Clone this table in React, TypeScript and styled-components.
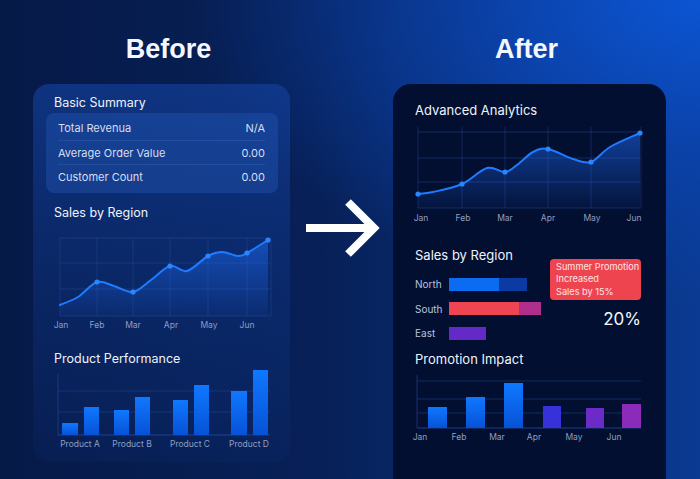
import React from 'react';
import styled, { createGlobalStyle } from 'styled-components';

type Pt = [number, number];

const GlobalStyle = createGlobalStyle`
  html, body {
    margin: 0;
    padding: 0;
    width: 700px;
    height: 479px;
    overflow: hidden;
  }
  body {
    font-family: Inter, "Noto Sans", sans-serif;
    background: #071d4f;
  }
`;

// catmull-rom -> bezier, keeps the curve passing through every point
const smoothPath = (pts: Pt[]) => {
  let d = `M${pts[0][0]},${pts[0][1]}`;
  for (let i = 0; i < pts.length - 1; i++) {
    const p0 = pts[i - 1] || pts[i];
    const p1 = pts[i];
    const p2 = pts[i + 1];
    const p3 = pts[i + 2] || p2;
    const c1x = p1[0] + (p2[0] - p0[0]) / 6;
    const c1y = p1[1] + (p2[1] - p0[1]) / 6;
    const c2x = p2[0] - (p3[0] - p1[0]) / 6;
    const c2y = p2[1] - (p3[1] - p1[1]) / 6;
    d += ` C${c1x},${c1y} ${c2x},${c2y} ${p2[0]},${p2[1]}`;
  }
  return d;
};

interface LineChartProps {
  id: string;
  width: number;
  height: number;
  points: Pt[];
  dots: Pt[];
  gridX: number[];
  gridY: number[];
  top: number;
  labels: { text: string; x: number }[];
  labelY: number;
}

const LineChart: React.FC<LineChartProps> = ({ id, width, height, points, dots, gridX, gridY, top, labels, labelY }) => {
  const line = smoothPath(points);
  const bottom = gridY[gridY.length - 1];
  const area = `${line} L${points[points.length - 1][0]},${bottom} L${points[0][0]},${bottom} Z`;
  const left = gridX[0];
  const right = gridX[gridX.length - 1];
  return (
    <ChartSvg width={width} height={height} viewBox={`0 0 ${width} ${height}`}>
      <defs>
        <linearGradient id={id} x1="0" y1="0" x2="0" y2="1">
          <stop offset="0%" stopColor="#1f6fff" stopOpacity="0.5" />
          <stop offset="100%" stopColor="#1f6fff" stopOpacity="0.06" />
        </linearGradient>
      </defs>
      {gridY.map((y) => (
        <line key={'h' + y} x1={left} x2={right} y1={y} y2={y} stroke="#2a52a6" strokeWidth="1" opacity="0.4" />
      ))}
      {gridX.map((x) => (
        <line key={'v' + x} x1={x} x2={x} y1={top} y2={bottom} stroke="#2a52a6" strokeWidth="1" opacity="0.35" />
      ))}
      <path d={area} fill={`url(#${id})`} />
      <path d={line} fill="none" stroke="#1f7bff" strokeWidth="2" strokeLinecap="round" />
      {dots.map(([x, y]) => (
        <circle key={x} cx={x} cy={y} r="2.6" fill="#2a86ff" />
      ))}
      {labels.map((l) => (
        <AxisLabel key={l.text} x={l.x} y={labelY} textAnchor="middle" dominantBaseline="middle">
          {l.text}
        </AxisLabel>
      ))}
    </ChartSvg>
  );
};

interface Bar {
  x: number;
  w: number;
  y: number;
  color?: string;
}

interface BarChartProps {
  id: string;
  width: number;
  height: number;
  bars: Bar[];
  axisTop: number;
  axisLeft: number;
  baseline: number;
  right: number;
  gridY: number[];
  labels: { text: string; x: number }[];
  labelY: number;
  labelSize: number;
}

const BarChart: React.FC<BarChartProps> = ({ id, width, height, bars, axisTop, axisLeft, baseline, right, gridY, labels, labelY, labelSize }) => (
  <ChartSvg width={width} height={height} viewBox={`0 0 ${width} ${height}`}>
    <defs>
      <linearGradient id={id} x1="0" y1="0" x2="0" y2="1">
        <stop offset="0%" stopColor="#0f78ff" />
        <stop offset="100%" stopColor="#0752d6" />
      </linearGradient>
    </defs>
    {gridY.map((y) => (
      <line key={y} x1={axisLeft} x2={right} y1={y} y2={y} stroke="#2a52a6" strokeWidth="1" opacity="0.4" />
    ))}
    <line x1={axisLeft} x2={axisLeft} y1={axisTop} y2={baseline} stroke="#2a52a6" strokeWidth="1" opacity="0.5" />
    <line x1={axisLeft} x2={right} y1={baseline} y2={baseline} stroke="#2548a0" strokeWidth="1.2" opacity="0.8" />
    {bars.map((b) => (
      <rect key={b.x} x={b.x} y={b.y} width={b.w} height={baseline - b.y} fill={b.color || `url(#${id})`} />
    ))}
    {labels.map((l) => (
      <AxisLabel key={l.text} x={l.x} y={labelY} fontSize={labelSize} textAnchor="middle" dominantBaseline="middle">
        {l.text}
      </AxisLabel>
    ))}
  </ChartSvg>
);

const months = ['Jan', 'Feb', 'Mar', 'Apr', 'May', 'Jun'];

const summary = [
  { label: 'Total Revenua', value: 'N/A' },
  { label: 'Average Order Value', value: '0.00' },
  { label: 'Customer Count', value: '0.00' },
];

const regions = [
  { name: 'North', parts: [{ w: 50, c: '#0b6cf2' }, { w: 28, c: '#0a3aa2' }] },
  { name: 'South', parts: [{ w: 70, c: '#ef4452' }, { w: 22, c: '#b02e8c' }] },
  { name: 'East', parts: [{ w: 37, c: '#6429c6' }] },
];

const App: React.FC = () => {
  return (
    <>
      <GlobalStyle />
      <Page>
        <BeforeColumn>
          <Heading $nudge={7}>Before</Heading>
          <BeforeCard>
            <CardTitle $indent={8}>Basic Summary</CardTitle>
            <SummaryBox>
              {summary.map((row) => (
                <SummaryRow key={row.label}>
                  <span>{row.label}</span>
                  <span>{row.value}</span>
                </SummaryRow>
              ))}
            </SummaryBox>
            <CardTitle $indent={8} $gap={12}>Sales by Region</CardTitle>
            <ChartSlot $gap={9}>
              <LineChart
                id="beforeArea"
                width={232}
                height={104}
                top={8}
                gridX={[14, 51, 87, 124, 162, 201, 225]}
                gridY={[8, 33, 59, 86]}
                points={[
                  [14, 75], [32, 67], [51, 52], [68, 56], [87, 62], [105, 50], [124, 36],
                  [141, 41], [162, 26], [176, 22], [192, 26], [201, 23], [222, 10],
                ]}
                dots={[[51, 52], [87, 62], [124, 36], [162, 26], [201, 23], [222, 10]]}
                labels={months.map((m, i) => ({ text: m, x: [15, 51, 87, 125, 163, 201][i] }))}
                labelY={96}
              />
            </ChartSlot>
            <CardTitle $indent={8} $gap={17}>Product Performance</CardTitle>
            <ChartSlot>
              <BarChart
                id="beforeBars"
                width={232}
                height={86}
                axisTop={7}
                axisLeft={12}
                baseline={68}
                right={224}
                gridY={[24, 45]}
                bars={[
                  { x: 16, w: 16, y: 56 }, { x: 38, w: 15, y: 40 },
                  { x: 68, w: 15, y: 43 }, { x: 89, w: 15, y: 30 },
                  { x: 127, w: 15, y: 33 }, { x: 148, w: 15, y: 18 },
                  { x: 185, w: 16, y: 24 }, { x: 207, w: 15, y: 3 },
                ]}
                labels={[
                  { text: 'Product A', x: 34 }, { text: 'Product B', x: 86 },
                  { text: 'Product C', x: 144 }, { text: 'Product D', x: 203 },
                ]}
                labelY={78}
                labelSize={8.5}
              />
            </ChartSlot>
          </BeforeCard>
        </BeforeColumn>

        <ArrowWrap>
          <svg width="80" height="60" viewBox="0 0 80 60">
            <line x1="4" y1="30" x2="72" y2="30" stroke="#ffffff" strokeWidth="8" />
            <polyline points="46,4 72,30 46,56" fill="none" stroke="#ffffff" strokeWidth="8" strokeLinejoin="miter" />
          </svg>
        </ArrowWrap>

        <AfterColumn>
          <Heading $nudge={-3}>After</Heading>
          <AfterCard>
            <CardTitle $size={13}>Advanced Analytics</CardTitle>
            <ChartSlot $gap={4} $shift={-5}>
              <LineChart
                id="afterArea"
                width={240}
                height={104}
                top={5}
                gridX={[8, 52, 95, 138, 181, 231]}
                gridY={[10, 36, 60, 86]}
                points={[
                  [8, 72], [23, 70], [52, 62], [77, 46], [95, 50], [107, 43], [123, 30],
                  [138, 27], [163, 37], [181, 40], [200, 25], [230, 11],
                ]}
                dots={[[8, 72], [52, 62], [95, 50], [138, 27], [181, 40], [230, 11]]}
                labels={months.map((m, i) => ({ text: m, x: [11, 53, 95, 138, 182, 224][i] }))}
                labelY={97}
              />
            </ChartSlot>
            <RegionSection>
              <RegionList>
                <CardTitle $size={13}>Sales by Region</CardTitle>
                <RegionRows>
                  {regions.map((r) => (
                    <RegionRow key={r.name}>
                      <RegionLabel>{r.name}</RegionLabel>
                      <BarTrack>
                        {r.parts.map((p) => (
                          <BarSegment key={p.c} $color={p.c} style={{ width: p.w }} />
                        ))}
                      </BarTrack>
                    </RegionRow>
                  ))}
                </RegionRows>
              </RegionList>
              <PromoSide>
                <Callout>
                  Summer Promotion
                  <br />
                  Increased
                  <br />
                  Sales by 15%
                </Callout>
                <Percent>20%</Percent>
              </PromoSide>
            </RegionSection>
            <CardTitle $size={13} $gap={8}>Promotion Impact</CardTitle>
            <ChartSlot $gap={5} $shift={-5}>
              <BarChart
                id="afterBars"
                width={240}
                height={76}
                axisTop={3}
                axisLeft={7}
                baseline={56}
                right={231}
                gridY={[9, 27, 41]}
                bars={[
                  { x: 18, w: 19, y: 35 }, { x: 56, w: 19, y: 25 },
                  { x: 94, w: 19, y: 11 }, { x: 133, w: 18, y: 34, color: '#3631d8' },
                  { x: 176, w: 18, y: 36, color: '#6c2bc6' }, { x: 212, w: 19, y: 32, color: '#8a2cb9' },
                ]}
                labels={months.map((m, i) => ({ text: m, x: [10, 49, 87, 124, 164, 204][i] }))}
                labelY={66}
                labelSize={8}
              />
            </ChartSlot>
          </AfterCard>
        </AfterColumn>
      </Page>
    </>
  );
};

export default App;

const Page = styled.div`
  width: 700px;
  height: 479px;
  box-sizing: border-box;
  padding-left: 33px;
  display: flex;
  align-items: flex-start;
  overflow: hidden;
  background:
    radial-gradient(ellipse 85% 75% at 100% 0%, rgba(12, 86, 214, 0.95) 0%, rgba(11, 68, 176, 0.65) 45%, rgba(8, 40, 110, 0) 85%),
    linear-gradient(90deg, #061a48 0%, #072057 45%, #0a3a92 100%);
`;

const BeforeColumn = styled.div`
  width: 257px;
  display: flex;
  flex-direction: column;
`;

const AfterColumn = styled.div`
  width: 273px;
  display: flex;
  flex-direction: column;
`;

const Heading = styled.div<{ $nudge: number }>`
  margin-top: 33px;
  height: 32px;
  line-height: 32px;
  text-align: center;
  font-family: "Liberation Sans", Arial, sans-serif;
  font-weight: 700;
  font-size: 27px;
  color: #f4f7ff;
  padding-left: ${({ $nudge }) => ($nudge > 0 ? $nudge * 2 : 0)}px;
  padding-right: ${({ $nudge }) => ($nudge < 0 ? -$nudge * 2 : 0)}px;
`;

const BeforeCard = styled.div`
  margin-top: 19px;
  height: 378px;
  box-sizing: border-box;
  padding: 11px 12px 0 13px;
  border-radius: 16px;
  background: linear-gradient(180deg, rgba(20, 66, 160, 0.62) 0%, rgba(16, 56, 140, 0.4) 50%, rgba(12, 46, 120, 0.18) 100%);
`;

const AfterCard = styled.div`
  margin-top: 19px;
  height: 420px;
  box-sizing: border-box;
  padding: 18px 25px 0 22px;
  border-radius: 18px;
  background: #020f31;
`;

const CardTitle = styled.div<{ $indent?: number; $gap?: number; $size?: number }>`
  margin-top: ${({ $gap }) => $gap || 0}px;
  padding-left: ${({ $indent }) => $indent || 0}px;
  font-size: ${({ $size }) => $size || 12.5}px;
  line-height: 16px;
  color: #eef3fb;
  white-space: nowrap;
`;

const SummaryBox = styled.div`
  margin-top: 2px;
  padding: 3px 13px 5px 12px;
  border-radius: 8px;
  background: rgba(34, 88, 182, 0.4);
`;

const SummaryRow = styled.div`
  height: 24px;
  display: flex;
  align-items: center;
  justify-content: space-between;
  font-size: 11px;
  color: #d5def0;
  box-sizing: border-box;
  & + & {
    border-top: 1px solid rgba(120, 160, 230, 0.16);
  }
`;

const ChartSlot = styled.div<{ $gap?: number; $shift?: number }>`
  margin-top: ${({ $gap }) => $gap || 0}px;
  margin-left: ${({ $shift }) => $shift || 0}px;
  line-height: 0;
`;

const ChartSvg = styled.svg`
  display: block;
  overflow: visible;
`;

const AxisLabel = styled.text`
  font-family: Inter, "Noto Sans", sans-serif;
  font-size: 8.5px;
  fill: #8d9fc4;
`;

const ArrowWrap = styled.div`
  width: 103px;
  padding-top: 198px;
  padding-left: 12px;
  box-sizing: border-box;
  line-height: 0;
`;

const RegionSection = styled.div`
  margin-top: 21px;
  display: flex;
  justify-content: space-between;
`;

const RegionList = styled.div`
  display: flex;
  flex-direction: column;
`;

const RegionRows = styled.div`
  margin-top: 11px;
  display: flex;
  flex-direction: column;
  gap: 4.5px;
`;

const RegionRow = styled.div`
  height: 20px;
  display: flex;
  align-items: center;
`;

const RegionLabel = styled.span`
  width: 34px;
  font-size: 10px;
  color: #b8c4dc;
`;

const BarTrack = styled.div`
  display: flex;
  height: 13px;
`;

const BarSegment = styled.div<{ $color: string }>`
  height: 100%;
  background: ${({ $color }) => $color};
`;

const PromoSide = styled.div`
  display: flex;
  flex-direction: column;
  align-items: flex-end;
  padding-top: 12px;
`;

const Callout = styled.div`
  width: 91px;
  height: 41px;
  box-sizing: border-box;
  padding: 2px 4px 0 6px;
  border-radius: 4px;
  background: #ee4450;
  font-size: 9.2px;
  line-height: 12.3px;
  color: #ffe4e6;
  white-space: nowrap;
`;

const Percent = styled.div`
  margin-top: 9px;
  font-size: 17px;
  line-height: 20px;
  color: #f4f7ff;
`;
